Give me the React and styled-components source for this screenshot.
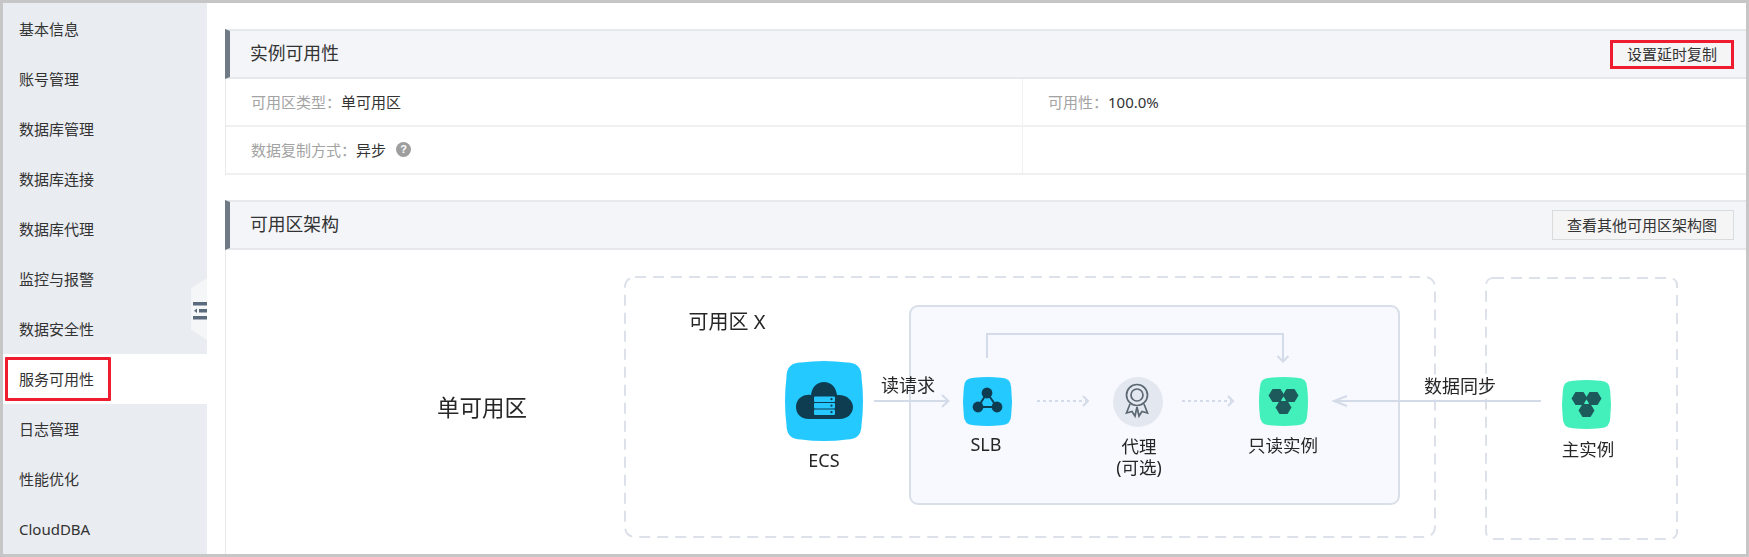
import React from "react";
import styled, { createGlobalStyle } from "styled-components";

const Global = createGlobalStyle`
  html, body { margin: 0; padding: 0; background: #fff; }
  body { font-family: "Noto Sans", "Noto Sans CJK SC", sans-serif; color: #333; }
  * { box-sizing: border-box; }
`;

const Frame = styled.div`
  width: 1749px;
  height: 557px;
  display: flex;
  border: 3px solid #c6c6c6;
  overflow: hidden;
  background: #fff;
`;

const Sidebar = styled.nav`
  position: relative;
  width: 204px;
  flex: none;
  padding-top: 1px;
  background: #e9ecf1;
`;

const NavItem = styled.div`
  position: relative;
  height: 50px;
  padding: 0 0 1px 16px;
  display: flex;
  align-items: center;
  font-size: 15px;
  background: ${(p) => (p.$active ? "#fff" : "transparent")};
`;

const RedMark = styled.span`
  position: absolute;
  left: 2px;
  top: 3px;
  width: 106px;
  height: 44px;
  border: 3px solid #ee1c2e;
  border-radius: 1px;
`;

const Toggle = styled.div`
  position: absolute;
  left: 188px;
  top: 275px;
  width: 16px;
  height: 62px;
  background: #f5f6f8;
  clip-path: polygon(100% 0, 100% 100%, 0 83%, 0 17%);
`;

const ToggleIcon = styled.svg`
  position: absolute;
  left: 2px;
  top: 24px;
  display: block;
`;

const Main = styled.main`
  flex: 1;
  min-width: 0;
  display: flex;
  flex-direction: column;
  padding: 26px 0 0 18px;
`;

const SectionHeader = styled.header`
  height: 50px;
  flex: none;
  display: flex;
  align-items: center;
  justify-content: space-between;
  padding: 0 12px 0 20px;
  background: #f4f5f9;
  border-top: 2px solid #e6e8ec;
  border-bottom: 2px solid #e6e8ec;
  border-left: 5px solid #6f7a85;
  margin-top: ${(p) => p.$gap || 0}px;
`;

const SectionTitle = styled.h2`
  margin: 0 0 4px;
  font-size: 17.8px;
  font-weight: 400;
  color: #333;
`;

const HeaderButton = styled.button`
  height: ${(p) => (p.$marked ? 29 : 30)}px;
  width: ${(p) => (p.$marked ? 124 : 182)}px;
  padding: 0 ${(p) => (p.$marked ? 14 : 16)}px 2px 0;
  font: inherit;
  font-size: 15px;
  color: #333;
  background: #f5f5f5;
  border: ${(p) => (p.$marked ? "3px solid #ee1c2e" : "1px solid #d9dcdf")};
  text-align: right;
`;

const InfoGrid = styled.div`
  display: grid;
  grid-template-columns: 797px 1fr;
  grid-auto-rows: 48px;
  border-left: 1px solid #e8eaec;
`;

const InfoCell = styled.div`
  display: flex;
  align-items: center;
  gap: 10px;
  padding: 0 0 2px 25px;
  font-size: 15px;
  border-bottom: 2px solid #eff0f2;
  border-right: ${(p) => (p.$right ? "none" : "1px solid #eff0f2")};
`;

const InfoText = styled.span`
  white-space: nowrap;
`;

const InfoLabel = styled.span`
  color: #a3a3a3;
`;

const Help = styled.span`
  width: 15px;
  height: 15px;
  border-radius: 50%;
  background: #9e9e9e;
  color: #fff;
  font-size: 11px;
  font-weight: 700;
  line-height: 15px;
  text-align: center;
  font-family: "Liberation Sans", sans-serif;
`;

const Canvas = styled.div`
  position: relative;
  flex: 1;
  border-left: 1px solid #e8eaec;
  overflow: hidden;
`;

const Drawing = styled.svg`
  position: absolute;
  left: 0;
  top: 0;
  display: block;
  filter: blur(0.35px);
`;

const Label = styled.div`
  position: absolute;
  left: ${(p) => p.$x - 226}px;
  top: ${(p) => p.$y - 250}px;
  transform: translate(-50%, -50%);
  font-size: ${(p) => p.$size || 17.5}px;
  line-height: 1.2;
  text-align: center;
  white-space: nowrap;
  color: #262626;
  filter: blur(0.25px);
`;

const WIRE = "#d3dbe8";
const DARK = "#0e3d52";
const TEAL = "#1d5a5c";

const squircle = (x, y, w, h, r, b) => {
  const R = x + w;
  const D = y + h;
  const cx = x + w / 2;
  const cy = y + h / 2;
  return [
    `M${x + r} ${y + b}`,
    `Q${cx} ${y - b} ${R - r} ${y + b}`,
    `Q${R - b} ${y + b} ${R - b} ${y + r}`,
    `Q${R + b} ${cy} ${R - b} ${D - r}`,
    `Q${R - b} ${D - b} ${R - r} ${D - b}`,
    `Q${cx} ${D + b} ${x + r} ${D - b}`,
    `Q${x + b} ${D - b} ${x + b} ${D - r}`,
    `Q${x - b} ${cy} ${x + b} ${y + r}`,
    `Q${x + b} ${y + b} ${x + r} ${y + b}Z`,
  ].join(" ");
};

const hexPoints = (cx, cy) =>
  [
    [-8, 0],
    [-4, -6.5],
    [4, -6.5],
    [8, 0],
    [4, 6.5],
    [-4, 6.5],
  ]
    .map(([a, b]) => `${cx + a},${cy + b}`)
    .join(" ");

const HexIcon = ({ x, y }) => (
  <g>
    <path d={squircle(x, y, 49, 49, 11, 0.8)} fill="#43f0bb" />
    <polygon points={hexPoints(x + 17.5, y + 18.5)} fill={TEAL} />
    <polygon points={hexPoints(x + 31.5, y + 18.5)} fill={TEAL} />
    <polygon points={hexPoints(x + 24.5, y + 30.5)} fill={TEAL} />
    <polygon points={`${x + 24.5},${y + 19.5} ${x + 22},${y + 23.5} ${x + 27},${y + 23.5}`} fill="#43f0bb" />
  </g>
);

const EcsIcon = () => (
  <g>
    <path d={squircle(785, 361, 78, 80, 16, 1.5)} fill="#24c9ff" />
    <path
      d="M809 419C800 419 796 413 796 407C796 399 803 394 811 395C812 387 817 382 824 382C831 382 836 387 837 395C846 394 853 400 853 407C853 414 847 419 840 419Z"
      fill={DARK}
    />
    {[396.5, 403, 409.5].map((y) => (
      <g key={y}>
        <rect x="814" y={y} width="21" height="5.4" rx="1" fill="#26c8ff" />
        <circle cx="831.5" cy={y + 2.7} r="1.1" fill={DARK} />
      </g>
    ))}
  </g>
);

const SlbIcon = () => (
  <g>
    <path d={squircle(963, 377, 49, 49, 11, 0.8)} fill="#24c9ff" />
    <path d="M987 393L978 407H997Z" fill="none" stroke={DARK} strokeWidth="2" />
    <circle cx="987" cy="393" r="5.4" fill={DARK} />
    <circle cx="978" cy="407" r="5.4" fill={DARK} />
    <circle cx="997" cy="407" r="5.4" fill={DARK} />
  </g>
);

const BadgeIcon = () => (
  <g>
    <circle cx="1138" cy="402" r="25" fill="#e3e7ef" />
    <g fill="none" stroke="#5b6873" strokeWidth="1.7">
      <circle cx="1137" cy="395" r="10.5" />
      <circle cx="1137" cy="395" r="6" />
      <path d="M1130 404L1126.5 413L1132 411.5L1135 416L1137 407" />
      <path d="M1144 404L1147.5 413L1142 411.5L1139 416L1137 407" />
    </g>
  </g>
);

const Wires = () => (
  <g fill="none" stroke={WIRE} strokeWidth="2">
    <path d="M874 401H948M942 395L948.5 401L942 407" />
    <path d="M987 358V334H1283V361M1277.5 356L1283 361.5L1288.5 356" />
    <path d="M1037 401H1086" strokeDasharray="3 3" />
    <path d="M1083 396L1088 401L1083 406" />
    <path d="M1182 401H1231" strokeDasharray="3 3" />
    <path d="M1228 396L1233 401L1228 406" />
    <path d="M1541 401H1335M1347 396L1334 401L1347 406" />
  </g>
);

const Diagram = () => (
  <Drawing width="1520" height="304" viewBox="226 250 1520 304">
    <g fill="none" stroke="#dce1ea" strokeWidth="2" strokeDasharray="11 7">
      <rect x="625" y="277" width="810" height="260" rx="10" />
      <rect x="1486" y="278" width="191" height="261" rx="7" />
    </g>
    <rect x="910" y="306" width="489" height="198" rx="8" fill="#f8f9fe" stroke="#d8dfe9" strokeWidth="2" />
    <Wires />
    <EcsIcon />
    <SlbIcon />
    <BadgeIcon />
    <HexIcon x={1259} y={377} />
    <HexIcon x={1562} y={380} />
  </Drawing>
);

const NAV = [
  "基本信息",
  "账号管理",
  "数据库管理",
  "数据库连接",
  "数据库代理",
  "监控与报警",
  "数据安全性",
  "服务可用性",
  "日志管理",
  "性能优化",
  "CloudDBA",
];

export default function App() {
  return (
    <>
      <Global />
      <Frame>
        <Sidebar>
          {NAV.map((name) => (
            <NavItem key={name} $active={name === "服务可用性"}>
              {name}
              {name === "服务可用性" && <RedMark />}
            </NavItem>
          ))}
          <Toggle>
            <ToggleIcon width="14" height="18" viewBox="0 0 14 18" fill="#5b6b7e">
              <rect x="0" y="0" width="14" height="3.5" />
              <rect x="6" y="7" width="8" height="3.5" />
              <path d="M1 8.7L4 6.5V11Z" />
              <rect x="0" y="14" width="14" height="3.5" />
            </ToggleIcon>
          </Toggle>
        </Sidebar>
        <Main>
          <SectionHeader>
            <SectionTitle>实例可用性</SectionTitle>
            <HeaderButton $marked>设置延时复制</HeaderButton>
          </SectionHeader>
          <InfoGrid>
            <InfoCell>
              <InfoText>
                <InfoLabel>可用区类型：</InfoLabel>单可用区
              </InfoText>
            </InfoCell>
            <InfoCell $right>
              <InfoText>
                <InfoLabel>可用性：</InfoLabel>100.0%
              </InfoText>
            </InfoCell>
            <InfoCell>
              <InfoText>
                <InfoLabel>数据复制方式：</InfoLabel>异步
              </InfoText>
              <Help>?</Help>
            </InfoCell>
            <InfoCell $right />
          </InfoGrid>
          <SectionHeader $gap={25}>
            <SectionTitle>可用区架构</SectionTitle>
            <HeaderButton>查看其他可用区架构图</HeaderButton>
          </SectionHeader>
          <Canvas>
            <Diagram />
            <Label $x={482} $y={407} $size={22.5}>单可用区</Label>
            <Label $x={727} $y={322} $size={20}>可用区 X</Label>
            <Label $x={908} $y={386} $size={18}>读请求</Label>
            <Label $x={1460} $y={387} $size={18}>数据同步</Label>
            <Label $x={824} $y={461} $size={18}>ECS</Label>
            <Label $x={986} $y={445} $size={18}>SLB</Label>
            <Label $x={1139} $y={457}>代理<br />(可选)</Label>
            <Label $x={1283} $y={445}>只读实例</Label>
            <Label $x={1588} $y={449}>主实例</Label>
          </Canvas>
        </Main>
      </Frame>
    </>
  );
}
